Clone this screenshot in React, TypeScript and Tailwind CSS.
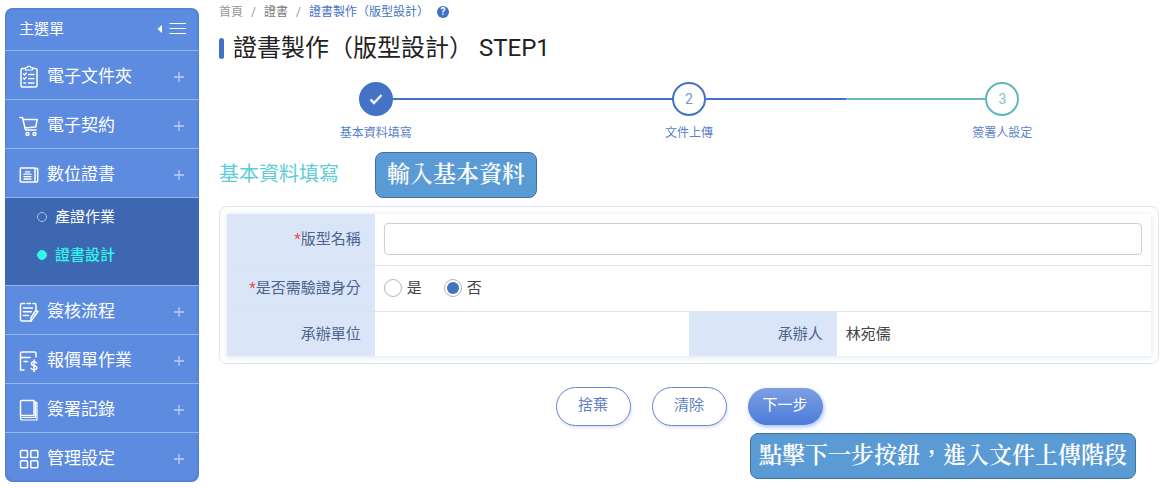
import type { ReactNode } from 'react';

const svgProps = {
  viewBox: '0 0 24 24',
  fill: 'none',
  stroke: 'currentColor',
  strokeWidth: 1.5,
  strokeLinecap: 'round' as const,
  strokeLinejoin: 'round' as const,
  className: 'h-6 w-6 shrink-0',
  'aria-hidden': true,
};

const ClipboardIcon = () => (
  <svg {...svgProps}>
    <path d="M8.500 3.500H5.500A1.500 1.500 0 0 0 4 5v15.500A1.500 1.500 0 0 0 5.500 22h13a1.500 1.500 0 0 0 1.500-1.500V5a1.500 1.500 0 0 0-1.500-1.500h-3" />
    <path d="M10 2.500a2.100 2.100 0 0 1 4 0h1.500v2.500h-7V2.500z" strokeWidth="1.200" />
    <path d="M6.500 9l1 1 1.700-2M6.500 13.200l1 1 1.700-2M6.800 18h1.800M11.500 9.500h5.500M11.500 13.700h5.500M11.500 18h5.500" strokeWidth="1.300" />
  </svg>
);

const CartIcon = () => (
  <svg {...svgProps}>
    <path d="M3 3.500h2.500l3 12.500h10.500M6.200 5.500h14l-1.500 7.500-11 1" />
    <circle cx="10.500" cy="20" r="1.500" strokeWidth="1.400" />
    <circle cx="17.500" cy="20" r="1.500" strokeWidth="1.400" />
  </svg>
);

const NewsIcon = () => (
  <svg {...svgProps}>
    <path d="M4 5h14v14H4a.7.700 0 0 1-.7-.7V5.700A.7.700 0 0 1 4 5zM18 5.500h2.700v12.500a1 1 0 0 1-1 1H18" />
    <path d="M8.500 8.800h4M7 11.200h7M7 13.600h7M7 16h7" strokeWidth="1.300" />
  </svg>
);

const SignFlowIcon = () => (
  <svg {...svgProps}>
    <path d="M7.500 3.500H5A1.500 1.500 0 0 0 3.500 5v14.500A1.500 1.500 0 0 0 5 21h9l7-9.500-2-1V5a1.500 1.500 0 0 0-1.500-1.500h-1.500M10 3.500h3.500" />
    <path d="M14 21v-3.500l4.500-6.500M6.500 8h9M6.500 11.800h8M6.500 15.500h5" />
  </svg>
);

const QuoteIcon = () => (
  <svg {...svgProps}>
    <path d="M7 21H3.500V4.500A1.500 1.500 0 0 1 5 3h12.500A1.500 1.500 0 0 1 19 4.500V8M4 8.500h9M7 12.500h3.500" />
    <path d="M19.500 14c-.6-1-1.500-1.300-2.600-1.300-1.500 0-2.500.8-2.500 2 0 2.800 5.400 1.300 5.400 4 0 1.300-1.200 2-2.800 2-1.300 0-2.300-.5-2.900-1.400M17 11v11.500" />
  </svg>
);

const BookIcon = () => (
  <svg {...svgProps}>
    <path d="M4.500 2.500H17V17.500H4.500a1 1 0 0 1-1-1v-13a1 1 0 0 1 1-1z" />
    <path d="M3.500 16.500V20a2 2 0 0 0 2 2H20V4.500h-1.500M18.500 3.500v16H5" strokeWidth="1.200" />
  </svg>
);

const GridIcon = () => (
  <svg {...svgProps}>
    <rect x="3.500" y="3.500" width="7" height="7" rx="0.800" />
    <rect x="13.800" y="3.500" width="7" height="7" rx="0.800" />
    <rect x="3.500" y="13.800" width="7" height="7" rx="0.800" />
    <rect x="13.800" y="13.800" width="7" height="7" rx="0.800" />
  </svg>
);

const PlusIcon = () => (
  <svg viewBox="0 0 12 12" className="h-3 w-3" stroke="#bcd0f4" strokeWidth="1.3" aria-hidden="true">
    <path d="M6 1v10M1 6h10" />
  </svg>
);

const menu = [
  { label: '電子文件夾', icon: <ClipboardIcon /> },
  { label: '電子契約', icon: <CartIcon /> },
  {
    label: '數位證書',
    icon: <NewsIcon />,
    children: [
      { label: '產證作業', active: false },
      { label: '證書設計', active: true },
    ],
  },
  { label: '簽核流程', icon: <SignFlowIcon /> },
  { label: '報價單作業', icon: <QuoteIcon /> },
  { label: '簽署記錄', icon: <BookIcon /> },
  { label: '管理設定', icon: <GridIcon /> },
];

const Sidebar = () => (
  <nav className="mt-2 w-[194px] shrink-0 self-start overflow-hidden rounded-lg bg-[#5d8bdf] pb-px text-white shadow-[inset_0_0_3px_#3f6bbd]">
    <div className="flex h-[42px] items-center justify-between pr-[13px] pl-[14px]">
      <span className="text-[15px]">主選單</span>
      <button type="button" aria-label="收合選單">
        <svg viewBox="0 0 30 14" className="block h-[14px] w-[30px]" aria-hidden="true">
          <path d="M6 3v8L1.500 7z" fill="#fff" />
          <path d="M13.500 1.500H30M13.500 6.500H30M13.500 11.500H30" stroke="#fff" strokeWidth="1" />
        </svg>
      </button>
    </div>
    <ul>
      {menu.map((item) => (
        <li key={item.label}>
          <button
            type="button"
            className="flex h-[49px] w-full items-center border-t border-[#96b5ed] pt-[3px] pr-[14px] pl-3 text-left"
          >
            {item.icon}
            <span className="ml-1.5 flex-1 text-[17px]">{item.label}</span>
            <PlusIcon />
          </button>
          {item.children && (
            <ul className="h-[88px] border-t border-[#96b5ed] bg-[#3d67b1] text-[15px] leading-[38px]">
              {item.children.map((child) => (
                <li key={child.label}>
                  <a
                    href="#"
                    className={`flex items-center gap-2 pl-8 ${child.active ? 'font-medium text-[#33f5ea]' : ''}`}
                  >
                    <span
                      className={`h-[10px] w-[10px] rounded-full border ${
                        child.active ? 'border-[#33f5ea] bg-[#33f5ea]' : 'border-[#a9c0ea]'
                      }`}
                    />
                    {child.label}
                  </a>
                </li>
              ))}
            </ul>
          )}
        </li>
      ))}
    </ul>
  </nav>
);

const Breadcrumb = () => (
  <nav className="flex h-5 items-center gap-2 text-[12px] text-[#999]">
    <a href="#">首頁</a>
    <span>/</span>
    <a href="#" className="text-[#777]">證書</a>
    <span>/</span>
    <a href="#" className="text-[#4472c4]">證書製作（版型設計）</a>
    <button
      type="button"
      aria-label="說明"
      className="flex h-3 w-3 items-center justify-center rounded-full bg-[#3f6fc6] text-[10px] leading-3 font-bold text-white"
    >
      ?
    </button>
  </nav>
);

const steps = [
  {
    label: '基本資料填寫',
    left: 'bg-transparent',
    right: 'bg-[#4472c4]',
    circle: 'border-[#4472c4] bg-[#4472c4] text-white',
  },
  {
    label: '文件上傳',
    left: 'bg-[#4472c4]',
    right: 'bg-[#4472c4]',
    circle: 'border-[#4472c4] text-[#7295d6]',
  },
  {
    label: '簽署人設定',
    left: 'bg-[#66bcbc]',
    right: 'bg-transparent',
    circle: 'border-[#5cb8b8] text-[#7cc4c6]',
  },
];

const Stepper = () => (
  <ol className="mt-4 flex">
    {steps.map((step, index) => (
      <li key={step.label} className="flex-1 text-center">
        <div className="flex items-center">
          <span className={`h-0.5 flex-1 ${step.left}`} />
          <span
            className={`flex h-[34px] w-[34px] items-center justify-center rounded-full border-2 text-[14px] ${step.circle}`}
          >
            {index === 0 ? (
              <svg viewBox="0 0 16 16" className="h-4 w-4" fill="none" stroke="#e8f0ff" strokeWidth="2.500" aria-hidden="true">
                <path d="M2.500 8.500l3.500 3.500 7.500-8" />
              </svg>
            ) : (
              index + 1
            )}
          </span>
          <span className={`h-0.5 flex-1 ${step.right}`} />
        </div>
        <p className="mt-2 text-[12px] leading-[18px] text-[#5a7fcb]">{step.label}</p>
      </li>
    ))}
  </ol>
);

const Callout = ({ children, className }: { children: ReactNode; className: string }) => (
  <p
    className={`flex h-[46px] items-center rounded-lg border border-[#41719c] bg-[#5b9bd5] font-['Liberation_Serif','Noto_Serif_CJK_TC','Noto_Sans_CJK_TC',serif] text-[23px] font-semibold whitespace-nowrap text-white ${className}`}
  >
    {children}
  </p>
);

const thClass = 'bg-[#dae5f7] pr-[14px] text-right font-normal text-[#4d638f]';
const radioClass =
  'h-[18px] w-[18px] appearance-none rounded-full border border-[#b5b5b5] bg-clip-content p-0.5 checked:bg-[#4472c4]';

const BasicForm = () => (
  <div className="mt-2 rounded-lg border border-[#dbe4f5] p-[7px]">
    <table className="w-full table-fixed border-collapse text-[15px] text-[#444] shadow-[0_1px_6px_#dde5e8]">
      <colgroup>
        <col className="w-[16%]" />
        <col className="w-[34%]" />
        <col className="w-[16%]" />
        <col className="w-[34%]" />
      </colgroup>
      <tbody>
        <tr className="h-[51px] border-b border-[#d5e7ec]">
          <th className={thClass}>
            <label htmlFor="templateName">
              <span className="text-[#f04848]">*</span>版型名稱
            </label>
          </th>
          <td colSpan={3} className="px-[9px]">
            <input
              id="templateName"
              type="text"
              className="block h-8 w-full rounded border border-[#cfcfcf] bg-white px-2 outline-none"
            />
          </td>
        </tr>
        <tr className="h-[46px] border-b border-[#d5e7ec]">
          <th className={thClass}>
            <span className="text-[#f04848]">*</span>是否需驗證身分
          </th>
          <td colSpan={3} className="px-[9px]">
            <div className="flex items-center gap-[22px]">
              <label className="flex items-center gap-[5px]">
                <input type="radio" name="verify" className={radioClass} />
                是
              </label>
              <label className="flex items-center gap-[5px]">
                <input type="radio" name="verify" defaultChecked className={radioClass} />
                否
              </label>
            </div>
          </td>
        </tr>
        <tr className="h-[45px]">
          <th className={thClass}>承辦單位</th>
          <td />
          <th className={thClass}>承辦人</th>
          <td className="px-[9px]">林宛儒</td>
        </tr>
      </tbody>
    </table>
  </div>
);

const outlineButton =
  'h-[39px] w-[75px] rounded-full border border-[#6588cb] bg-white pb-0.5 text-[#6080c4] shadow-[1px_2px_3px_#dfe4ee]';

export default function App() {
  return (
    <div className="flex gap-5 bg-white pr-1 pl-[5px] font-[Roboto,'Noto_Sans_CJK_TC',sans-serif]">
      <Sidebar />
      <main className="min-w-0 flex-1 pt-0.5">
        <Breadcrumb />
        <h1 className="mt-2 flex h-9 items-center gap-[9px] text-[24px] text-[#222]">
          <span className="h-[21px] w-[5px] rounded-sm bg-[#4472c4]" />
          證書製作（版型設計） STEP1
        </h1>
        <Stepper />
        <div className="mt-[10px] flex items-center gap-9">
          <h2 className="pb-0.5 text-[20px] text-[#5fcbd8]">基本資料填寫</h2>
          <Callout className="px-[11px]">輸入基本資料</Callout>
        </div>
        <BasicForm />
        <div className="mt-[23px] flex items-center justify-center gap-[21px] text-[15px]">
          <button type="button" className={outlineButton}>捨棄</button>
          <button type="button" className={outlineButton}>清除</button>
          <button
            type="button"
            className="h-[37px] w-[75px] rounded-full bg-linear-to-b from-[#7d9fe3] to-[#4c7bd9] pb-0.5 text-white shadow-[1px_2px_4px_#a9c2f5]"
          >
            下一步
          </button>
        </div>
        <Callout className="mt-[7px] mr-[23px] ml-auto w-fit px-2">點擊下一步按鈕，進入文件上傳階段</Callout>
      </main>
    </div>
  );
}
